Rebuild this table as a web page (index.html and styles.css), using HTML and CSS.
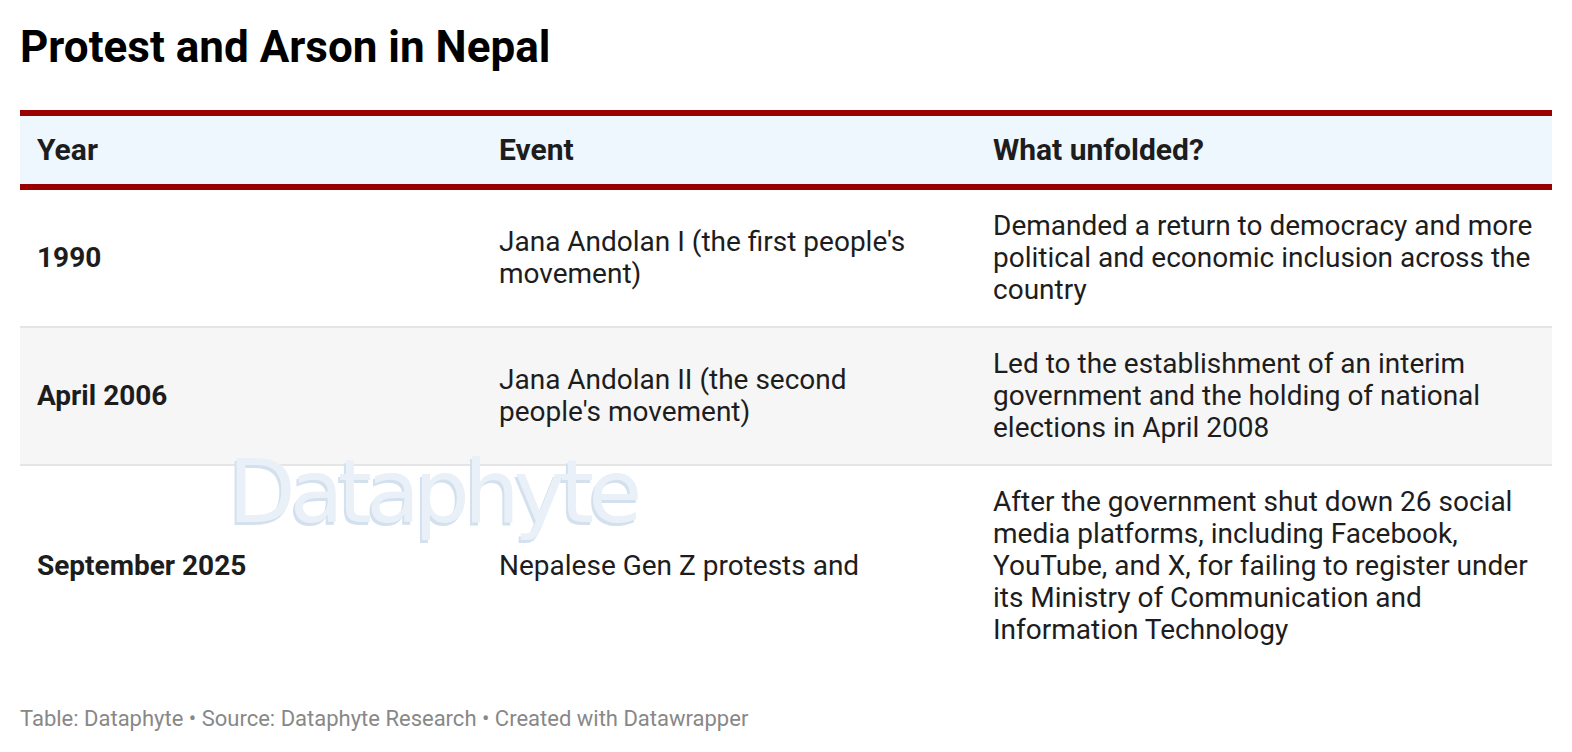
FILE: index.html
```html
<!DOCTYPE html>
<html lang="en">
<head>
<meta charset="utf-8">
<title>Protest and Arson in Nepal</title>
<link rel="stylesheet" href="styles.css">
</head>
<body>
<div class="chart">
  <h1 class="title">Protest and Arson in Nepal</h1>
  <div class="table-wrap">
    <table class="data">
      <colgroup>
        <col class="c1"><col class="c2"><col class="c3">
      </colgroup>
      <thead>
        <tr><th>Year</th><th>Event</th><th>What unfolded?</th></tr>
      </thead>
      <tbody>
        <tr>
          <td class="year">1990</td>
          <td>Jana Andolan I (the first people's movement)</td>
          <td>Demanded a return to democracy and more political and economic inclusion across the country</td>
        </tr>
        <tr class="alt">
          <td class="year">April 2006</td>
          <td>Jana Andolan II (the second people's movement)</td>
          <td>Led to the establishment of an interim government and the holding of national elections in April 2008</td>
        </tr>
        <tr>
          <td class="year">September 2025</td>
          <td>Nepalese Gen Z protests and</td>
          <td>After the government shut down 26 social media platforms, including Facebook, YouTube, and X, for failing to register under its Ministry of Communication and Information Technology</td>
        </tr>
      </tbody>
    </table>
    <div class="watermark">Dataphyte</div>
  </div>
  <p class="footer">Table: Dataphyte • Source: Dataphyte Research • Created with Datawrapper</p>
</div>
</body>
</html>
```
FILE: styles.css
```css
html, body {
  margin: 0;
  padding: 0;
  background: #ffffff;
}
body {
  font-family: Roboto, "Liberation Sans", sans-serif;
  color: #1d1d1d;
}
.chart {
  padding: 21px 20px 0 20px;
}
.title {
  margin: 0;
  font-size: 44px;
  line-height: 52px;
  font-weight: 700;
  color: #000;
}
.table-wrap {
  position: relative;
  margin-top: 37px;
}
.data {
  width: 100%;
  border-collapse: collapse;
  table-layout: fixed;
  font-size: 28px;
  line-height: 32px;
}
.c1 { width: 462px; }
.c2 { width: 494px; }
.data thead tr {
  background: #eef6fe;
  border-top: 6px solid #990000;
  border-bottom: 6px solid #990000;
}
.data th {
  text-align: left;
  font-weight: 700;
  font-size: 30px;
  line-height: 34px;
  padding: 17px 30px 17px 17px;
  color: #1d1d1d;
}
.data td {
  padding: 20px 30px 20px 17px;
  vertical-align: middle;
  color: #1d1d1d;
}
.data th:last-child,
.data td:last-child {
  padding-right: 8px;
}
.data tbody tr {
  border-bottom: 2px solid #e5e5e5;
}
.data tbody tr:last-child {
  border-bottom: none;
}
.data tr.alt {
  background: #f6f6f6;
}
.data td.year {
  font-weight: 700;
}
.watermark {
  position: absolute;
  left: 208px;
  top: 338px;
  font-family: "DejaVu Sans", sans-serif;
  font-size: 88px;
  line-height: 1;
  letter-spacing: -6px;
  color: #e9f0f8;
  text-shadow: -2px 3px 0 #d3e0ed;
  pointer-events: none;
}
.footer {
  margin: 40px 0 0 0;
  font-size: 22px;
  line-height: 26px;
  color: #888888;
}
```
